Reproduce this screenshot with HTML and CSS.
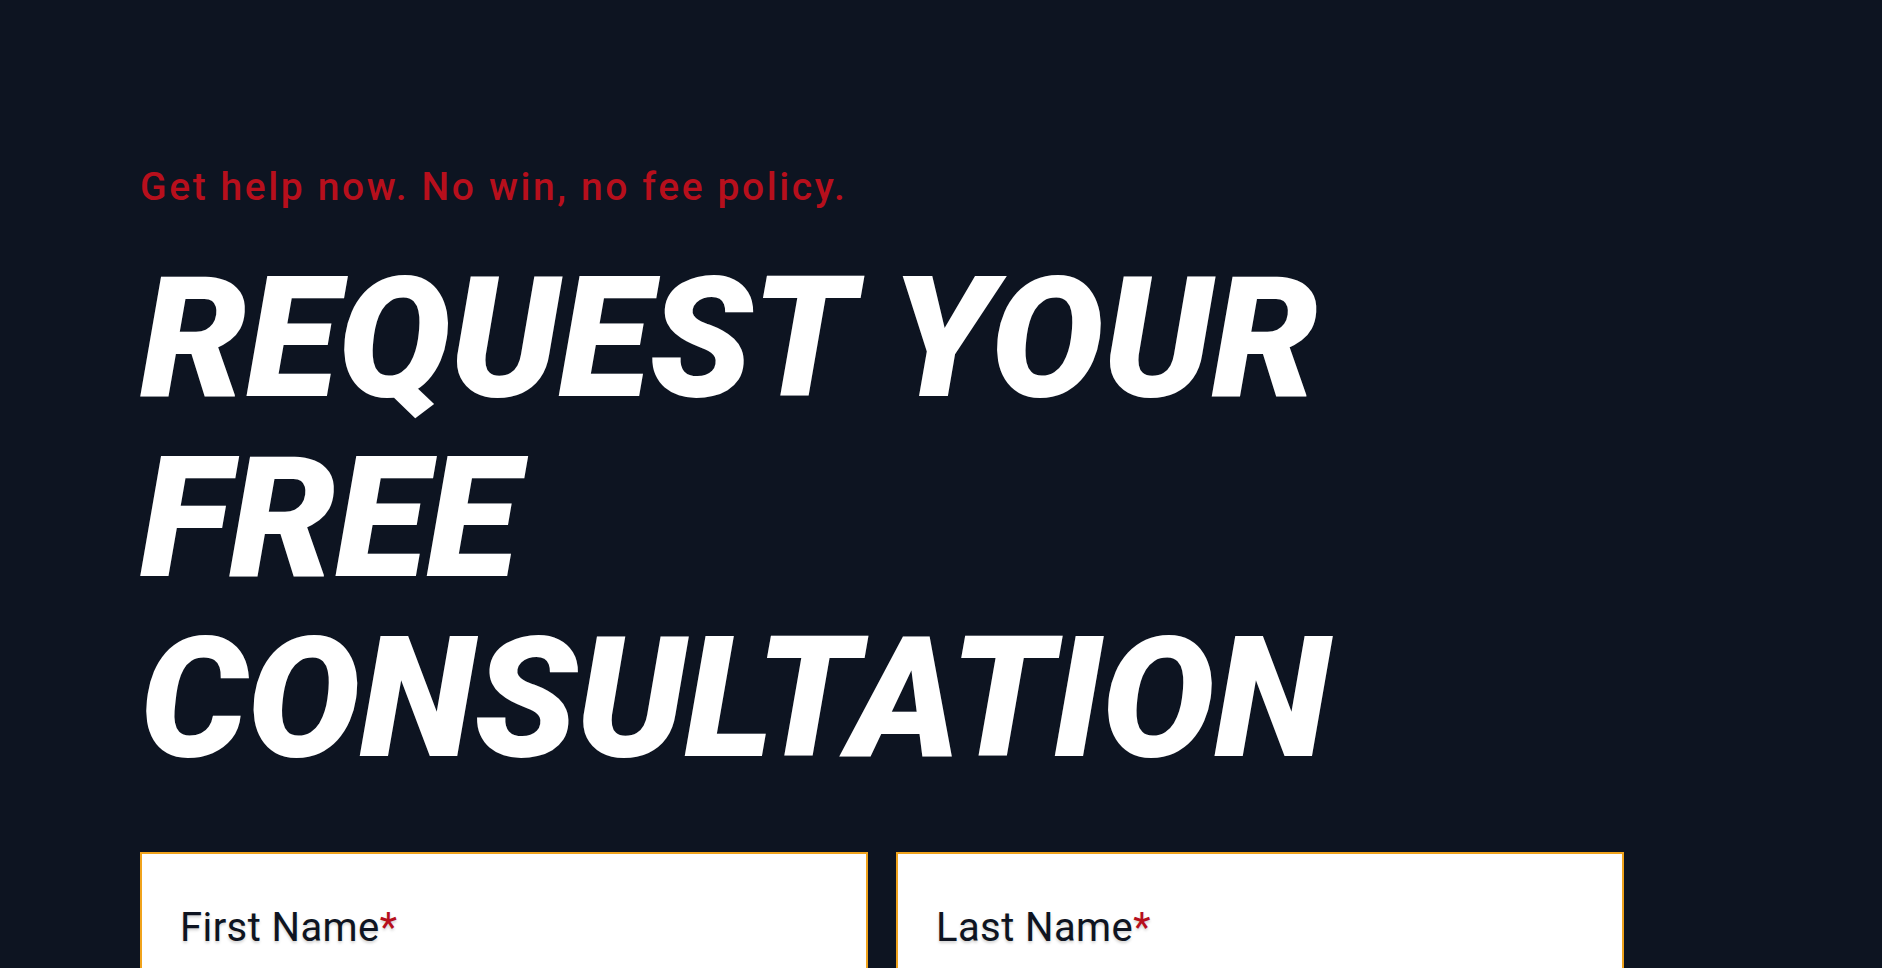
FILE: index.html
```html
<!DOCTYPE html>
<html lang="en">
<head>
<meta charset="utf-8">
<title>Request your free consultation</title>
<link rel="stylesheet" href="styles.css">
</head>
<body>
<main class="section">
  <p class="eyebrow">Get help now. No win, no fee policy.</p>
  <h1 class="title">Request your<br>free<br>consultation</h1>
  <form class="form">
    <div class="field">
      <label class="label" for="first">First Name<span class="req">*</span></label>
      <input class="input" id="first" type="text">
    </div>
    <div class="field">
      <label class="label" for="last">Last Name<span class="req">*</span></label>
      <input class="input" id="last" type="text">
    </div>
  </form>
</main>
</body>
</html>
```
FILE: styles.css
```css
html, body {
  margin: 0;
  padding: 0;
  overflow: hidden;
  background: #0d1421;
}

.section {
  box-sizing: border-box;
  height: 100vh;
  overflow: hidden;
  padding: 164px 258px 0 140px;
  font-family: Roboto, "Liberation Sans", sans-serif;
}

.eyebrow {
  margin: 0;
  font-size: 39px;
  line-height: 46px;
  font-weight: 500;
  letter-spacing: 2.6px;
  color: #b70f1c;
}

.title {
  margin: 38px 0 0;
  font-size: 169px;
  line-height: 180px;
  font-weight: 900;
  font-style: italic;
  text-transform: uppercase;
  color: #ffffff;
  letter-spacing: -0.6px;
}

.form {
  margin-top: 64px;
  display: grid;
  grid-template-columns: 1fr 1fr;
  gap: 28px;
}

.field {
  background: #ffffff;
  border: 2px solid #f0a31c;
  padding: 50px 38px 40px;
  height: 200px;
}

.label {
  display: block;
  font-size: 40px;
  line-height: 48px;
  font-weight: 400;
  letter-spacing: 0.4px;
  color: #0e1421;
  text-shadow: 0 2px 3px rgba(0, 0, 0, 0.18);
}

.req {
  color: #b70f1c;
}

.input {
  display: block;
  margin-top: 20px;
  width: 100%;
  box-sizing: border-box;
  height: 60px;
  border: 0;
  background: transparent;
}
```
